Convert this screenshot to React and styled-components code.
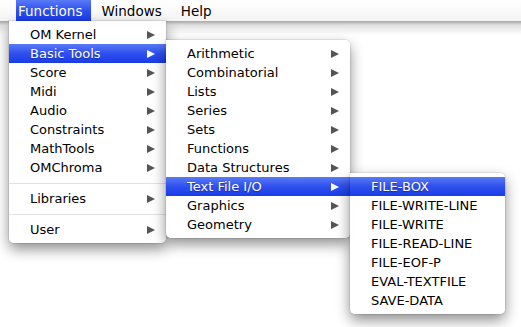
import React from 'react';
import styled, { createGlobalStyle, css } from 'styled-components';

const GlobalStyle = createGlobalStyle`
    html, body {
        margin: 0;
        padding: 0;
        background: #ffffff;
    }
    body {
        font-family: "DejaVu Sans", "Liberation Sans", sans-serif;
        -webkit-font-smoothing: antialiased;
    }
`;

const mainItems = [
    { label: 'OM Kernel' },
    { label: 'Basic Tools', open: true },
    { label: 'Score' },
    { label: 'Midi' },
    { label: 'Audio' },
    { label: 'Constraints' },
    { label: 'MathTools' },
    { label: 'OMChroma' },
    { separator: true },
    { label: 'Libraries' },
    { separator: true },
    { label: 'User' },
];

const basicTools = [
    'Arithmetic',
    'Combinatorial',
    'Lists',
    'Series',
    'Sets',
    'Functions',
    'Data Structures',
    'Text File I/O',
    'Graphics',
    'Geometry',
];

const fileFunctions = [
    'FILE-BOX',
    'FILE-WRITE-LINE',
    'FILE-WRITE',
    'FILE-READ-LINE',
    'FILE-EOF-P',
    'EVAL-TEXTFILE',
    'SAVE-DATA',
];

const highlight = css`
    background: linear-gradient(#5a7af7, #2f50ef 50%, #1a3ce6);
    color: #ffffff;
`;

const Screen = styled.div`
    width: 521px;
    height: 327px;
    position: relative;
    overflow: hidden;
    background: #ffffff;
`;

const MenuBar = styled.div`
    height: 21px;
    display: flex;
    align-items: stretch;
    gap: 10px;
    padding-left: 16px;
    background: linear-gradient(#ffffff, #f4f4f4);
    position: relative;

    &::after {
        content: "";
        position: absolute;
        left: 0;
        right: 0;
        top: 21px;
        height: 14px;
        background: linear-gradient(rgba(0, 0, 0, 0.35), rgba(0, 0, 0, 0.12) 30%, rgba(0, 0, 0, 0));
    }
`;

const BarItem = styled.div`
    position: relative;
    display: flex;
    align-items: center;
    padding: ${p => (p.$active ? '0 9px 0 2px' : '0 9px 0 0')};
    font-size: 13.5px;
    color: #000;
    ${p => p.$active && highlight}
`;

const Menu = styled.div`
    position: absolute;
    z-index: ${p => p.$level + 2};
    width: ${p => p.$width}px;
    padding: 4px 0;
    background: rgba(255, 255, 255, 0.97);
    border-radius: ${p => (p.$level === 0 ? '0 0 5px 5px' : '0 5px 5px 5px')};
    box-shadow: 0 0 0 1px rgba(0, 0, 0, 0.08), 0 6px 14px rgba(0, 0, 0, 0.45);
`;

const MainMenu = styled(Menu)`
    top: 21px;
    left: -7px;
`;

const SubMenu = styled(Menu)`
    top: -4px;
    left: 100%;
`;

const Row = styled.div`
    position: relative;
    height: 19px;
    display: flex;
    align-items: center;
    justify-content: space-between;
    padding: 0 11px 0 21px;
    font-size: 13px;
    color: #000;
    white-space: nowrap;
    ${p => p.$active && highlight}
`;

const Label = styled.span`
    ${p => p.$active && css`text-shadow: 0 1px 1px rgba(0, 0, 60, 0.4);`}
`;

const Separator = styled.div`
    height: 12px;
    display: flex;
    align-items: center;

    &::before {
        content: "";
        flex: 1;
        height: 1px;
        background: #e2e2e2;
    }
`;

const Arrow = styled.span`
    width: 0;
    height: 0;
    border-top: 4.5px solid transparent;
    border-bottom: 4.5px solid transparent;
    border-left: 8px solid ${p => (p.$active ? '#ffffff' : '#555555')};
`;

const MenuRow = ({ label, active, submenu, children }) => (
    <Row $active={active}>
        <Label $active={active}>{label}</Label>
        {submenu && <Arrow $active={active} />}
        {children}
    </Row>
);

export default function App() {
    return (
        <Screen>
            <GlobalStyle />
            <MenuBar>
                <BarItem $active>
                    Functions
                    <MainMenu $level={0} $width={157}>
                        {mainItems.map((item, i) =>
                            item.separator ? (
                                <Separator key={i} />
                            ) : (
                                <MenuRow key={i} label={item.label} active={item.open} submenu>
                                    {item.open && (
                                        <SubMenu $level={1} $width={184}>
                                            {basicTools.map(name => (
                                                <MenuRow
                                                    key={name}
                                                    label={name}
                                                    active={name === 'Text File I/O'}
                                                    submenu
                                                >
                                                    {name === 'Text File I/O' && (
                                                        <SubMenu $level={2} $width={155}>
                                                            {fileFunctions.map(fn => (
                                                                <MenuRow
                                                                    key={fn}
                                                                    label={fn}
                                                                    active={fn === 'FILE-BOX'}
                                                                />
                                                            ))}
                                                        </SubMenu>
                                                    )}
                                                </MenuRow>
                                            ))}
                                        </SubMenu>
                                    )}
                                </MenuRow>
                            )
                        )}
                    </MainMenu>
                </BarItem>
                <BarItem>Windows</BarItem>
                <BarItem>Help</BarItem>
            </MenuBar>
        </Screen>
    );
}
